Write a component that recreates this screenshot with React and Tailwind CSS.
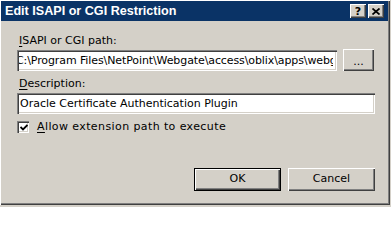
import React from "react";

function CapBtn({ children }) {
  return (
    <div className="w-[16px] h-[14px] bg-[#d4d0c8] flex items-center justify-center shadow-[inset_1px_1px_0_#ffffff,inset_-1px_-1px_0_#404040,inset_-2px_-2px_0_#808080]">
      {children}
    </div>
  );
}

function Btn({ children, def, className = "" }) {
  if (def) {
    return (
      <div className={"border border-black bg-[#d4d0c8] " + className}>
        <div className="w-full h-full flex items-center justify-center shadow-[inset_1px_1px_0_#ffffff,inset_-1px_-1px_0_#404040,inset_-2px_-2px_0_#808080]">
          {children}
        </div>
      </div>
    );
  }
  return (
    <div className={"bg-[#d4d0c8] flex items-center justify-center shadow-[inset_1px_1px_0_#ffffff,inset_-1px_-1px_0_#404040,inset_-2px_-2px_0_#808080] " + className}>
      {children}
    </div>
  );
}

const sunken =
  "bg-white shadow-[inset_1px_1px_0_#808080,inset_2px_2px_0_#404040,inset_-1px_-1px_0_#ffffff,inset_-2px_-2px_0_#d4d0c8]";

export default function App() {
  return (
    <div className="w-[391px] h-[207px] bg-[#d4d0c8] font-['DejaVu_Sans',sans-serif] text-[11px] text-black overflow-hidden">
      <div className="w-[390px] h-[205px] flex flex-col p-px shadow-[inset_1px_1px_0_#ffffff,inset_-1px_-1px_0_#404040,inset_-2px_-2px_0_#808080]">
        <div className="h-[20px] w-[387px] bg-[#0a3366] flex items-center justify-between pl-[4px] pr-[4px]">
          <span className="font-['Liberation_Sans',sans-serif] font-bold text-[12.6px] text-white leading-[13px]">
            Edit ISAPI or CGI Restriction
          </span>
          <div className="flex gap-[2px]">
            <CapBtn>
              <span className="font-['DejaVu_Sans',sans-serif] font-bold text-[11px] leading-[11px]">?</span>
            </CapBtn>
            <CapBtn>
              <svg width="8" height="7" viewBox="0 0 8 7">
                <path d="M0.5 0.5 L7.5 6.5 M7.5 0.5 L0.5 6.5" stroke="#000" strokeWidth="1.7" />
              </svg>
            </CapBtn>
          </div>
        </div>

        <div className="flex flex-col pl-[16px] pr-[14px]">
          <div className="mt-[13px] pl-[2px] leading-[13px]">
            <span className="underline underline-offset-2">I</span>SAPI or CGI path:
          </div>
          <div className="mt-[2px] flex gap-[6px] items-start">
            <div className={"mt-px w-[320px] h-[21px] overflow-hidden flex items-center pl-[2px] pr-[4px] " + sunken}>
              <div className="overflow-hidden w-full">
                <div className="whitespace-nowrap leading-[13px] ml-[-3px] tracking-[-0.1px]">
                  C:\Program Files\NetPoint\Webgate\access\oblix\apps\webgate\bin\webgate.dll
                </div>
              </div>
            </div>
            <Btn className="w-[31px] h-[22px]">
              <span className="leading-[11px] mt-[2px]">...</span>
            </Btn>
          </div>

          <div className="mt-[6px] pl-[2px] leading-[13px]">
            <span className="underline underline-offset-2">D</span>escription:
          </div>
          <div className={"mt-[3px] w-[358px] h-[21px] flex items-center pl-[3px] " + sunken}>
            <span className="leading-[13px] whitespace-nowrap">Oracle Certificate Authentication Plugin</span>
          </div>

          <div className="mt-[6px] flex items-center h-[13px]">
            <div className={"w-[12px] h-[12px] flex items-center justify-center " + sunken}>
              <svg width="8" height="7" viewBox="0 0 8 7" className="ml-[1px] mt-[1px]">
                <path d="M0.5 3 L3 5.5 L7.5 1" stroke="#000" strokeWidth="1.8" fill="none" />
              </svg>
            </div>
            <span className="ml-[8px] leading-[13px] tracking-[0.4px]">
              <span className="underline underline-offset-2">A</span>llow extension path to execute
            </span>
          </div>

          <div className="mt-[35px] flex justify-end gap-[7px]">
            <Btn def className="w-[87px] h-[23px]">OK</Btn>
            <Btn className="w-[87px] h-[23px]">Cancel</Btn>
          </div>
        </div>
      </div>
    </div>
  );
}
